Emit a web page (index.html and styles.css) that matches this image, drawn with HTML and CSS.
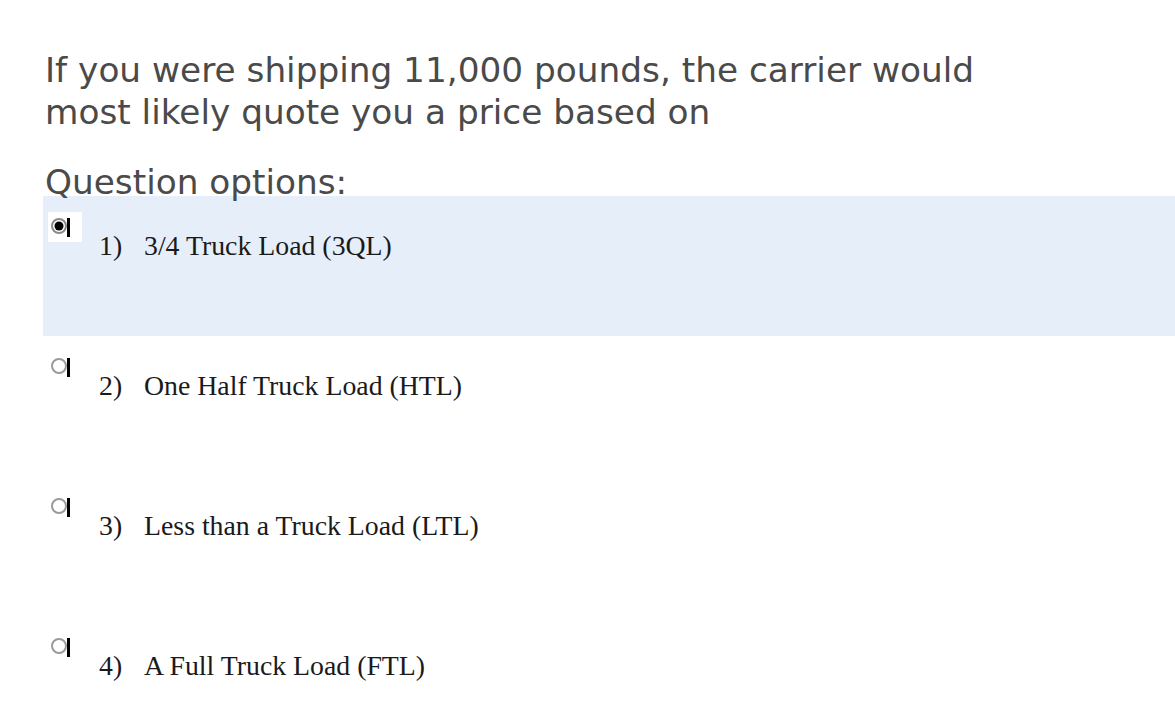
FILE: index.html
```html
<!DOCTYPE html>
<html>
<head>
<meta charset="utf-8">
<link rel="stylesheet" href="styles.css">
</head>
<body>
<div class="page">
  <p class="question">If you were shipping 11,000 pounds, the carrier would<br>most likely quote you a price based on</p>
  <h2 class="options-title">Question options:</h2>
  <ul class="options">
    <li class="option selected">
      <span class="radio"><svg width="34" height="30" viewBox="0 0 34 30"><circle cx="11" cy="14" r="7" fill="#fff" stroke="#8a8a8a" stroke-width="2"/><circle cx="11" cy="14" r="4.5" fill="#000"/><rect x="19" y="6" width="3" height="19" fill="#000"/></svg></span>
      <span class="num">1)</span><span class="label">3/4 Truck Load (3QL)</span>
    </li>
    <li class="option">
      <span class="radio"><svg width="34" height="30" viewBox="0 0 34 30"><circle cx="11" cy="14" r="7" fill="#fff" stroke="#9a9a9a" stroke-width="2"/><rect x="19" y="6" width="3" height="19" fill="#000"/></svg></span>
      <span class="num">2)</span><span class="label">One Half Truck Load (HTL)</span>
    </li>
    <li class="option">
      <span class="radio"><svg width="34" height="30" viewBox="0 0 34 30"><circle cx="11" cy="14" r="7" fill="#fff" stroke="#9a9a9a" stroke-width="2"/><rect x="19" y="6" width="3" height="19" fill="#000"/></svg></span>
      <span class="num">3)</span><span class="label">Less than a Truck Load (LTL)</span>
    </li>
    <li class="option">
      <span class="radio"><svg width="34" height="30" viewBox="0 0 34 30"><circle cx="11" cy="14" r="7" fill="#fff" stroke="#9a9a9a" stroke-width="2"/><rect x="19" y="6" width="3" height="19" fill="#000"/></svg></span>
      <span class="num">4)</span><span class="label">A Full Truck Load (FTL)</span>
    </li>
  </ul>
</div>
</body>
</html>
```
FILE: styles.css
```css
html, body {
  margin: 0;
  padding: 0;
  background: #fff;
  overflow: hidden;
}
.page {
  padding: 49px 0 0 45px;
}
.question {
  margin: 0;
  font-family: "DejaVu Sans", sans-serif;
  font-size: 34.3px;
  line-height: 42px;
  color: #4a4a4a;
}
.options-title {
  margin: 28px 0 0 0;
  font-family: "DejaVu Sans", sans-serif;
  font-weight: normal;
  font-size: 34.3px;
  line-height: 42px;
  color: #4a4a4a;
  height: 35px;
}
.options {
  list-style: none;
  margin: 0 0 0 -2px;
  padding: 0;
}
.option {
  display: flex;
  align-items: flex-start;
  height: 140px;
  box-sizing: border-box;
  padding: 16px 0 0 5px;
  font-family: "Liberation Serif", serif;
  font-size: 27.8px;
  color: #1a1a1a;
  width: 1200px;
}
.option.selected {
  background: #e6eff9;
}
.radio {
  width: 34px;
  height: 30px;
  display: block;
}
.option.selected .radio {
  background: #fff;
}
.radio svg { display: block; }
.num {
  margin: 18px 0 0 17px;
  width: 45px;
  line-height: 32px;
}
.label {
  margin-top: 18px;
  line-height: 32px;
}
```
